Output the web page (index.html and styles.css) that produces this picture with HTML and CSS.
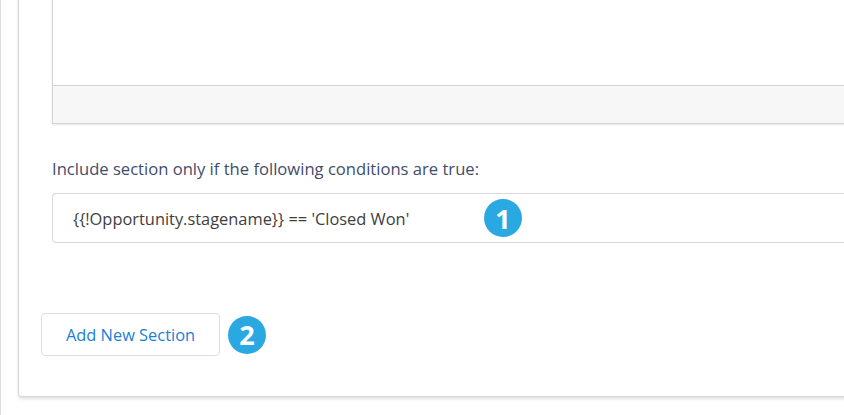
FILE: index.html
```html
<!DOCTYPE html>
<html lang="en">
<head>
    <meta charset="UTF-8">
    <meta name="viewport" content="width=device-width, initial-scale=1.0">
    <title>Section Settings</title>
    <link rel="stylesheet" href="styles.css">
</head>
<body>
    <div class="page">
        <div class="card">
            <div class="section-body">
                <!-- Editor area, scrolled partly out of view -->
                <div class="editor">
                    <div class="editor-content"></div>
                    <div class="editor-footer"></div>
                </div>

                <label class="field-label" for="condition">Include section only if the following conditions are true:</label>
                <div class="condition-wrap">
                    <input type="text" id="condition" class="condition-input" value="{{!Opportunity.stagename}} == 'Closed Won'">
                    <span class="callout callout-one">1</span>
                </div>
            </div>

            <div class="card-actions">
                <button class="btn-neutral">Add New Section</button>
                <span class="callout">2</span>
            </div>
        </div>
    </div>
</body>
</html>
```

FILE: styles.css
```css
/* Basic reset */
* {
    margin: 0;
    padding: 0;
    box-sizing: border-box;
}

body {
    font-family: "Open Sans", "Liberation Sans", sans-serif;
    background-color: #fff;
    height: 415px;
    overflow: hidden;
}

/* Outer page column with its thin left rule */
.page {
    display: flow-root;
    border-left: 1px solid #dcdcdc;
    height: 100%;
    padding-left: 17px;
}

/* Main card, its top is scrolled above the window */
.card {
    margin-top: -61px;
    margin-right: -40px;
    background-color: #fff;
    border: 1px solid #d8d8d8;
    border-radius: 4px;
    box-shadow: 0 2px 3px rgba(0, 0, 0, 0.12);
}

.section-body {
    padding: 0 0 0 33px;
}

/* Editor box */
.editor {
    border: 1px solid #d4d4d4;
    border-right: none;
    border-top: none;
    box-shadow: 0 1px 2px rgba(0, 0, 0, 0.1);
}

.editor-content {
    height: 145px;
    background-color: #fff;
}

.editor-footer {
    height: 38px;
    background-color: #f7f7f7;
    border-top: 1px solid #d4d4d4;
}

/* Condition field */
.field-label {
    display: block;
    margin-top: 34px;
    font-size: 16.6px;
    line-height: 22px;
    color: #3f4d6a;
}

.condition-wrap {
    position: relative;
    margin-top: 13px;
}

.condition-input {
    display: block;
    width: 100%;
    height: 50px;
    padding: 0 20px;
    border: 1px solid #d8d8d8;
    border-right: none;
    border-radius: 4px 0 0 4px;
    font-family: inherit;
    font-size: 16.4px;
    color: #3e3e3e;
    background-color: #fff;
    outline: none;
}

/* Numbered callouts */
.callout {
    display: inline-flex;
    justify-content: center;
    align-items: center;
    width: 38px;
    height: 38px;
    border-radius: 50%;
    background-color: #2aa8e2;
    color: #fff;
    font-family: "Open Sans", sans-serif;
    font-weight: bold;
    font-size: 27px;
}

.callout-one {
    position: absolute;
    left: 432px;
    top: 6px;
}

/* Footer actions */
.card-actions {
    display: flex;
    align-items: center;
    gap: 8px;
    padding: 70px 0 40px 22px;
}

.btn-neutral {
    width: 179px;
    height: 43px;
    background-color: #fff;
    border: 1px solid #d8dde6;
    border-radius: 4px;
    color: #1b7fd4;
    font-family: inherit;
    font-size: 16.4px;
    cursor: pointer;
}
```
